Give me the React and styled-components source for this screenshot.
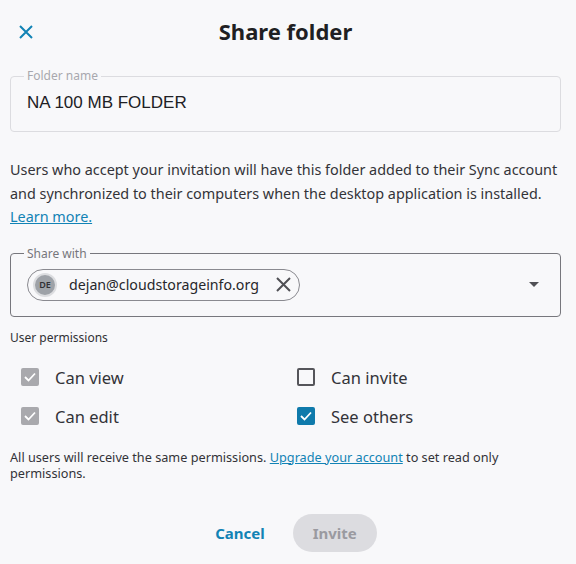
import React from "react";
import styled, { createGlobalStyle } from "styled-components";

const GlobalStyle = createGlobalStyle`
  body {
    margin: 0;
    background: #f8f8fa;
    font-family: "Noto Sans", "Open Sans", sans-serif;
    color: #2b2b2f;
  }
`;

const teal = "#1283b5";

export default function App() {
  return (
    <>
      <GlobalStyle />
      <Dialog>
        <Header>
          <CloseButton aria-label="Close">
            <svg width="14" height="14" viewBox="0 0 14 14">
              <path d="M1 1 L13 13 M13 1 L1 13" stroke={teal} strokeWidth="2" />
            </svg>
          </CloseButton>
          <Title>Share folder</Title>
          <span />
        </Header>

        <Field>
          <Legend>Folder name</Legend>
          <FolderValue>NA 100 MB FOLDER</FolderValue>
        </Field>

        <Intro>
          Users who accept your invitation will have this folder added to their Sync account
          and synchronized to their computers when the desktop application is installed.
          <br />
          <TextLink href="#">Learn more.</TextLink>
        </Intro>

        <Field $strong>
          <Legend $strong>Share with</Legend>
          <ShareRow>
            <Chip>
              <Avatar>DE</Avatar>
              <ChipText>dejan@cloudstorageinfo.org</ChipText>
              <svg width="15" height="15" viewBox="0 0 15 15">
                <path d="M1 1 L14 14 M14 1 L1 14" stroke="#505055" strokeWidth="2" />
              </svg>
            </Chip>
            <Caret />
          </ShareRow>
        </Field>

        <SmallLabel>User permissions</SmallLabel>
        <Permissions>
          <Option>
            <Box $state="disabled"><Tick /></Box>
            Can view
          </Option>
          <Option>
            <Box $state="off" />
            Can invite
          </Option>
          <Option>
            <Box $state="disabled"><Tick /></Box>
            Can edit
          </Option>
          <Option>
            <Box $state="on"><Tick /></Box>
            See others
          </Option>
        </Permissions>

        <Note>
          All users will receive the same permissions. <TextLink href="#">Upgrade your account</TextLink> to
          set read only permissions.
        </Note>

        <Actions>
          <Button $variant="text">Cancel</Button>
          <Button $variant="disabled">Invite</Button>
        </Actions>
      </Dialog>
    </>
  );
}

function Tick() {
  return (
    <svg width="12" height="10" viewBox="0 0 12 10">
      <path d="M1 5 L4.5 8.5 L11 1.5" fill="none" stroke="#fff" strokeWidth="1.8" />
    </svg>
  );
}

const Dialog = styled.div`
  width: 551px;
  padding: 0 15px 0 10px;
`;

const Header = styled.div`
  display: grid;
  grid-template-columns: 40px 1fr 40px;
  align-items: center;
  height: 64px;
`;

const CloseButton = styled.button`
  border: 0;
  background: none;
  padding: 0;
  margin-left: 9px;
  display: flex;
  cursor: pointer;
`;

const Title = styled.h1`
  margin: 0 0 2px;
  text-align: center;
  font-size: 22px;
  font-weight: 700;
  color: #1f1f23;
`;

const Field = styled.fieldset`
  margin: 5px 0 0;
  padding: 0 13px;
  border: 1px solid ${(p) => (p.$strong ? "#77777d" : "#dcdce0")};
  border-radius: 4px;
`;

const Legend = styled.legend`
  padding: 0 3px;
  font-size: 12px;
  line-height: 14px;
  color: ${(p) => (p.$strong ? "#76767c" : "#a8a8ae")};
`;

const FolderValue = styled.div`
  font-family: "Liberation Sans", Arial, sans-serif;
  font-size: 17px;
  line-height: 20px;
  padding: 10px 3px 18px;
  color: #202024;
`;

const Intro = styled.p`
  margin: 26px 0 18px;
  font-size: 14.4px;
  line-height: 23.5px;
  color: #333338;
`;

const TextLink = styled.a`
  color: ${teal};
  text-decoration: underline;
`;

const ShareRow = styled.div`
  display: flex;
  align-items: center;
  justify-content: space-between;
  padding: 8px 8px 15px 3px;
`;

const Chip = styled.div`
  display: flex;
  align-items: center;
  gap: 12px;
  height: 30px;
  padding: 0 8px 0 5px;
  border: 1px solid #8a8a90;
  border-radius: 16px;
`;

const Avatar = styled.span`
  width: 20px;
  height: 20px;
  border-radius: 50%;
  background: #9ea2a8;
  border: 2px solid #dcdde0;
  display: flex;
  align-items: center;
  justify-content: center;
  font-size: 9px;
  font-weight: 600;
  color: #303034;
`;

const ChipText = styled.span`
  font-size: 14.2px;
  color: #27272b;
  margin-right: 5px;
`;

const Caret = styled.span`
  width: 0;
  height: 0;
  border-left: 5px solid transparent;
  border-right: 5px solid transparent;
  border-top: 5px solid #505055;
`;

const SmallLabel = styled.div`
  margin-top: 13px;
  font-size: 12px;
  line-height: 16px;
  color: #303034;
`;

const Permissions = styled.div`
  display: grid;
  grid-template-columns: 276px 1fr;
  grid-auto-rows: 39px;
  margin-top: 12px;
  padding-left: 11px;
`;

const Option = styled.label`
  display: flex;
  align-items: center;
  gap: 16px;
  font-size: 16.5px;
  color: #333338;
`;

const boxColors = {
  disabled: "background: #a9a9ad; border-color: #a9a9ad;",
  off: "background: transparent; border-color: #55555a;",
  on: "background: #0f7aab; border-color: #0f7aab;",
};

const Box = styled.span`
  box-sizing: border-box;
  width: 18px;
  height: 18px;
  border: 2px solid;
  border-radius: 2px;
  display: flex;
  align-items: center;
  justify-content: center;
  ${(p) => boxColors[p.$state]}
`;

const Note = styled.p`
  margin: 13px 0 0;
  font-size: 12.7px;
  line-height: 16px;
  color: #333338;
  max-width: 510px;
`;

const Actions = styled.div`
  display: flex;
  justify-content: center;
  gap: 7px;
  margin-top: 33px;
`;

const Button = styled.button`
  height: 38px;
  padding: 0 ${(p) => (p.$variant === "disabled" ? "20px" : "21px")};
  border: 0;
  border-radius: 19px;
  font-family: inherit;
  font-size: 15px;
  font-weight: 700;
  background: ${(p) => (p.$variant === "disabled" ? "#dcdce0" : "transparent")};
  color: ${(p) => (p.$variant === "disabled" ? "#9a9aa0" : teal)};
  cursor: pointer;
`;
